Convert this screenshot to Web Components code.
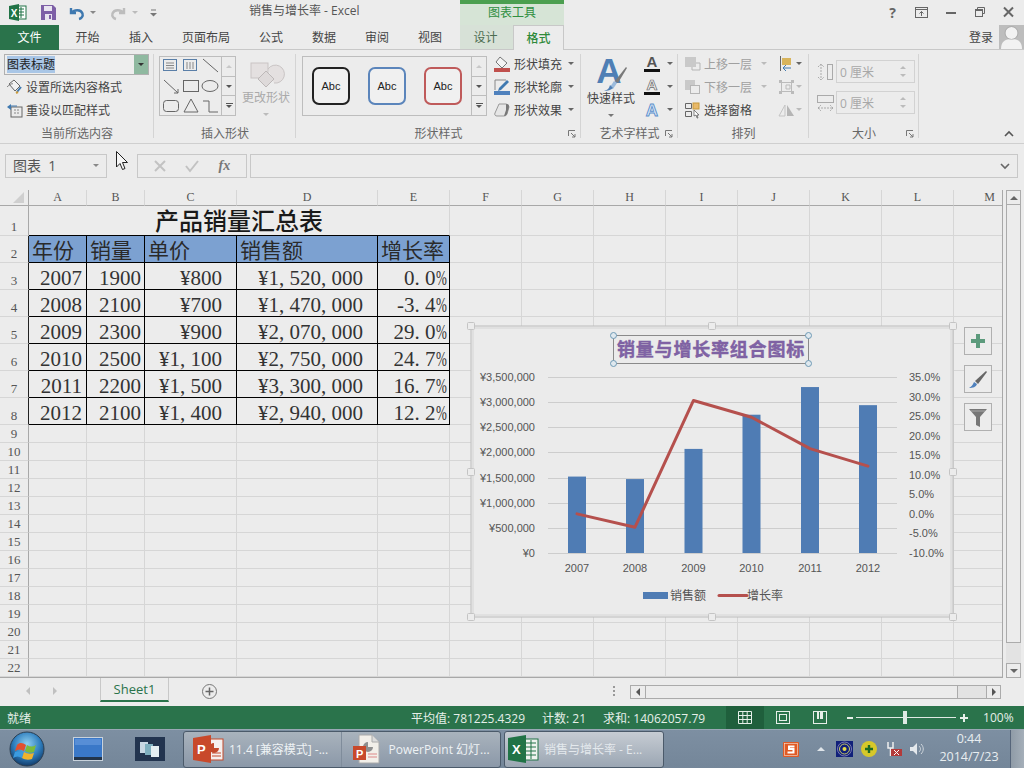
<!DOCTYPE html>
<html lang="zh"><head><meta charset="utf-8"><title>销售与增长率 - Excel</title>
<style>
html,body{margin:0;padding:0;height:100%;overflow:hidden;background:#ececec}
body{font:12px "Open Sans","Noto Sans CJK SC",sans-serif;color:#444;width:1024px;height:768px;position:relative;display:flex;flex-direction:column}
</style></head><body>
<x-titlebar></x-titlebar>
<x-tabs></x-tabs>
<x-ribbon></x-ribbon>
<x-formula></x-formula>
<x-sheet></x-sheet>
<x-sheetbar></x-sheetbar>
<x-status></x-status>
<x-taskbar></x-taskbar>
<x-cursor></x-cursor>
<script>
function def(tag,css,html,init){
  customElements.define(tag,class extends HTMLElement{
    constructor(){super();const s=this.attachShadow({mode:'open'});
      const h=typeof html==='function'?html(this):html;
      s.innerHTML='<style>:host{box-sizing:border-box}*{box-sizing:border-box}'+css+'</style>'+h;
      if(init)init(s,this);}
  });
}
const caret=(c='#666')=>`<i style="display:inline-block;width:0;height:0;border:3px solid transparent;border-top:3px solid ${c};border-bottom:0"></i>`;
const svg=(w,h,b,st='')=>`<svg width="${w}" height="${h}" viewBox="0 0 ${w} ${h}" style="display:block;flex:none;overflow:visible;${st}" fill="none">${b}</svg>`;

def('x-titlebar',`:host{display:flex;align-items:center;height:25px;flex:none;color:#555;position:relative}
.i{flex:none;display:flex;align-items:center;justify-content:center}
.t{position:absolute;left:249px;top:3px;line-height:16px;white-space:nowrap;color:#555}
.band{position:absolute;left:460px;width:104px;top:0;height:25px;background:#d6e4d6;border-top:4px solid #4c9f50;text-align:center;line-height:18px;color:#2f8f3f}
.r{margin-left:auto;display:flex;align-items:center;padding-right:1px;margin-top:-1px}
.r span{width:29px;display:flex;justify-content:center;align-items:center;font-weight:700;font-size:13px;color:#666}`,
`<div class="i" style="margin-left:9px;width:18px">${svg(18,17,'<rect x="7" y="2" width="10" height="13" fill="#fff" stroke="#217346"/><path d="M10 5h5M10 8h5M10 11h5M12 3v11" stroke="#217346"/><path d="M0 2l10-2v17L0 15z" fill="#217346"/><text x="1.8" y="12.5" font-family="Liberation Sans" font-weight="700" font-size="10" fill="#fff">X</text>')}</div>
<div class="i" style="margin-left:13px;width:16px">${svg(15,15,'<path d="M0 0h12l3 3v12H0z" fill="#7d5fa6"/><rect x="3" y="1" width="8" height="5" fill="#e8e4ef"/><rect x="4" y="9" width="7" height="6" fill="#e8e4ef"/><rect x="8" y="10" width="2" height="4" fill="#7d5fa6"/>')}</div>
<div class="i" style="margin-left:12px;width:17px">${svg(16,14,'<path d="M2 2v5h5" stroke="#3f79b0" stroke-width="2.4"/><path d="M3 6.5C5 3.5 12 3 13.5 7.5 14.5 10.5 12 12.5 10 13" stroke="#3f79b0" stroke-width="2.4"/>')}</div>
<div class="i" style="margin-left:4px;width:7px">${caret('#888')}</div>
<div class="i" style="margin-left:14px;width:17px;transform:scaleX(-1)">${svg(16,14,'<path d="M2 2v5h5" stroke="#bdbdbd" stroke-width="2.4"/><path d="M3 6.5C5 3.5 12 3 13.5 7.5 14.5 10.5 12 12.5 10 13" stroke="#bdbdbd" stroke-width="2.4"/>')}</div>
<div class="i" style="margin-left:4px;width:7px">${caret('#bbb')}</div>
<div class="i" style="margin-left:12px;width:7px;display:block">${svg(7,8,'<path d="M1 1h5" stroke="#777"/><path d="M0 4h7L3.500 7.500z" fill="#777"/>')}</div>
<div class="t">销售与增长率 - Excel</div>
<div class="band">图表工具</div>
<div class="r">
<span style="font-size:14px">?</span>
<span>${svg(13,11,'<rect x=".5" y=".5" width="12" height="10" stroke="#666"/><path d="M.5 2.500h12M6.500 9V4.500M4.500 6.500l2-2 2 2" stroke="#666"/>')}</span>
<span>${svg(10,3,'<rect y="1" width="10" height="2" fill="#666"/>')}</span>
<span>${svg(10,10,'<path d="M2.500 2.500V.5h7v6h-2" stroke="#666"/><rect x=".5" y="2.500" width="7" height="7" stroke="#666"/><path d="M.5 3.500h7" stroke="#666"/>')}</span>
<span>${svg(11,10,'<path d="M1 .5l9 9M10 .5l-9 9" stroke="#666" stroke-width="2"/>')}</span>
</div>`);

def('x-tabs',`:host{display:flex;height:25px;flex:none;border-bottom:1px solid #c8c8c8;position:relative}
div{display:flex;align-items:center;justify-content:center;flex:none;height:24px;color:#444;padding-bottom:1px}
.file{width:59px;background:#2a734b;color:#fff;height:25px}
.d{background:#d7e1d7;color:#4c6c50;padding-right:2px}
.f{background:#ececec;border:1px solid #c8c8c8;border-bottom:0;height:25px;color:#2f8a3a;font-weight:500}
.log{margin-left:auto;width:30px;color:#444;justify-content:flex-start}
.av{width:25px;background:#bdbdbd;margin-right:0;align-items:flex-end;margin-left:0;padding:0}`,
`<div class="file">文件</div>
<div style="width:57px">开始</div><div style="width:50px">插入</div><div style="width:80px">页面布局</div><div style="width:50px">公式</div><div style="width:56px">数据</div><div style="width:50px">审阅</div><div style="width:56px">视图</div><div style="width:2px"></div>
<div class="d" style="width:53px">设计</div><div class="f" style="width:51px">格式</div>
<div class="log">登录</div><div class="av">${svg(25,24,'<circle cx="12.500" cy="8" r="6" fill="#f2f2f2"/><path d="M2 24c0-8 5-10 10.500-10S23 16 23 24z" fill="#f2f2f2"/><circle cx="12.500" cy="8" r="6.500" stroke="#9a9a9a" stroke-width=".5"/>')}</div>`);

def('r-group',`:host{display:flex;flex-direction:column;flex:none;height:93px;position:relative}
:host::after{content:"";position:absolute;right:0;top:4px;bottom:5px;width:1px;background:#d4d4d4}
.c{height:74px;display:flex}
.l{height:19px;text-align:center;line-height:20px;color:#666;position:relative}
svg{position:absolute;right:5px;top:6px}`,
h=>`<div class="c"><slot></slot></div><div class="l">${h.getAttribute('label')||''}${h.hasAttribute('launch')?svg(8,8,'<path d="M.5 6V.5H7M3 3l4 4M7 4v3H4" stroke="#777"/>'):''}</div>`);

def('r-item',`:host{display:flex;align-items:center;height:23px;white-space:nowrap;color:#444}
:host([off]){color:#a0a0a0}
.ic{display:flex;justify-content:center;align-items:center;flex:none}
.cr{display:flex}`,
h=>`<span class="ic" style="width:${h.getAttribute('iw')||18}px"><slot name="icon"></slot></span><span style="margin-left:${h.getAttribute('g')||2}px"><slot></slot></span>${h.hasAttribute('cg')?`<span class="cr" style="margin-left:${h.getAttribute('cg')}px">${caret(h.hasAttribute('off')?'#bbb':'#666')}</span>`:''}`);

def('r-scroll',`:host{display:flex;flex-direction:column;width:15px;flex:none;border-left:1px solid #bdbdbd;height:100%}
div{flex:1;display:flex;align-items:center;justify-content:center;border-bottom:1px solid #bdbdbd}
div:last-child{border-bottom:0;flex-direction:column;gap:1px}
.u{border-bottom-color:#bdbdbd}`,
`<div class="u"><i style="width:0;height:0;border:3px solid transparent;border-bottom:3px solid #c8c8c8;border-top:0"></i></div><div>${caret('#555')}</div><div><i style="width:7px;height:1px;background:#555"></i>${caret('#555')}</div>`);

def('r-big',`:host{display:flex;flex-direction:column;align-items:center;width:54px;flex:none;color:#444}
:host([off]){color:#aaa}
.i{height:40px;display:flex;align-items:center;justify-content:center;padding-top:6px}
.t{height:18px;line-height:16px;white-space:nowrap}
.c{height:12px;display:flex;align-items:center}`,
h=>`<div class="i" style="height:${h.getAttribute('ih')||40}px"><slot name="icon"></slot></div><div class="t"><slot></slot></div><div class="c">${caret(h.hasAttribute('off')?'#bbb':'#777')}</div>`);

def('r-abc',`:host{display:flex;align-items:center;justify-content:center;width:38px;height:38px;flex:none;border-radius:7px;border:2px solid var(--c);font:11px "Liberation Sans",sans-serif;color:#222;background:#f0f0f0}`,`<slot></slot>`);

def('r-input',`:host{display:flex;align-items:center;width:79px;height:23px;flex:none;border:1px solid #d2d2d2;background:#ececec;color:#a8a8a8;padding-left:3px;justify-content:space-between;padding-right:8px}
b{display:flex;flex-direction:column;gap:5px}
i{display:block;width:0;height:0;border:3px solid transparent}`,
`<span><slot></slot></span><b><i style="border-top:0;border-bottom:3px solid #bbb"></i><i style="border-bottom:0;border-top:3px solid #bbb"></i></b>`);

def('x-ribbon',`:host{display:flex;height:94px;flex:none;border-bottom:1px solid #cfcfcf;overflow:hidden}
.col{display:flex;flex-direction:column}
.combo{width:145px;height:21px;margin:4px 0 0 4px;border:1px solid #b0b0b0;display:flex;background:#eee}
.combo span{flex:1;padding:1px 0 0 2px}
.combo mark{background:#a9c6e6;color:#222;display:inline-block;line-height:17px}
.combo b{width:14px;background:#8fb9a0;display:flex;align-items:center;justify-content:center}
.gal{display:flex;border:1px solid #bdbdbd;height:60px;margin-top:6px;background:#ececec}
.abc{flex:1;display:flex;align-items:center;padding-left:9px;gap:18px}
.coll{flex:1;display:flex;justify-content:flex-end;align-items:flex-end;padding:0 10px 6px}`,
`<r-group style="width:154px" label="当前所选内容"><div class="col">
  <div class="combo"><span><mark>图表标题</mark></span><b>${caret('#333')}</b></div>
  <r-item style="margin:0 0 0 5px" g="3">${svg(17,16,'<path d="M3 5l5-4 6 6-5 5z" fill="#f2f2f2" stroke="#666"/><path d="M1 8c2-2 5-4 6-3" stroke="#777"/><path d="M11 13l4-5" stroke="#3f79b0" stroke-width="2"/><path d="M10 14l2-1" stroke="#c99a3a" stroke-width="2"/>').replace('<svg','<svg slot="icon"')}设置所选内容格式</r-item>
  <r-item style="margin-left:5px" g="3">${svg(17,16,'<rect x="5" y="5" width="11" height="10" stroke="#666"/><path d="M8 8h6M8 11h6" stroke="#888" stroke-dasharray="2 1"/><path d="M1 5l4-3v6z" fill="#3f79b0"/><path d="M5 4h6" stroke="#3f79b0"/>').replace('<svg','<svg slot="icon"')}重设以匹配样式</r-item>
</div></r-group>

<r-group style="width:142px" label="插入形状">
  <div class="gal" style="width:77px;margin-left:5px">
  ${svg(61,58,`<g stroke="#666"><rect x="3.500" y="2.500" width="13" height="11" stroke="#5a7fa8"/><path d="M6 6h8M6 8.500h8M6 11h8" stroke="#888"/>
  <rect x="23.500" y="2.500" width="13" height="11" stroke="#5a7fa8"/><path d="M27 5v7M30 5v7M33 5v7" stroke="#888"/>
  <path d="M43 2l15 13"/>
  <path d="M4 23l14 13M18 32v4h-4"/><rect x="23.500" y="23.500" width="15" height="11"/><ellipse cx="50" cy="29" rx="8" ry="5.500"/>
  <rect x="3.500" y="43.500" width="15" height="11" rx="3"/><path d="M31 42l7 13H24z"/><path d="M43 44h6v11h9"/></g>`)}
  <r-scroll></r-scroll></div>
  <r-big off style="margin-left:3px">${svg(32,32,'<path d="M18 12a9 9 0 1 1 6 14" fill="#e4e0e0" stroke="#c9c4c4"/><rect x="1" y="6" width="17" height="15" fill="#e4e0e0" stroke="#c9c4c4"/><path d="M16 14l8 8-8 8-8-8z" fill="#dedada" stroke="#bdb8b8"/>').replace('<svg','<svg slot="icon"')}更改形状</r-big>
</r-group>

<r-group style="width:285px" label="形状样式" launch>
  <div class="gal" style="width:185px;margin-left:6px">
    <div class="abc"><r-abc style="--c:#222">Abc</r-abc><r-abc style="--c:#5b85bb">Abc</r-abc><r-abc style="--c:#bf5a5a">Abc</r-abc></div>
    <r-scroll></r-scroll>
  </div>
  <div class="col" style="margin:2px 0 0 6px">
    <r-item cg="6" g="3">${svg(17,16,'<path d="M6 1l7 6-5 5-6-6z" fill="#f4f4f4" stroke="#777"/><rect y="12" width="16" height="4" fill="#c0504d"/>').replace('<svg','<svg slot="icon"')}形状填充</r-item>
    <r-item cg="6" g="3">${svg(17,16,'<path d="M1 11V1h11" stroke="#888"/><path d="M5 9l8-8 2 2-8 8-3 1z" fill="#3f79b0"/><rect y="12" width="16" height="4" fill="#4f81bd"/>').replace('<svg','<svg slot="icon"')}形状轮廓</r-item>
    <r-item cg="6" g="3">${svg(17,14,'<path d="M5 1h7a3 3 0 0 1 3 3l-2 7a3 3 0 0 1-3 2H3a2 2 0 0 1-2-3z" fill="#e6e6e6" stroke="#999"/><path d="M12 1a3 3 0 0 1 3 3l-2 7a3 3 0 0 1-3 2l2-6z" fill="#777"/>').replace('<svg','<svg slot="icon"')}形状效果</r-item>
  </div>
</r-group>

<r-group style="width:97px" label="艺术字样式" launch>
  <r-big ih="41" style="margin-left:3px">${svg(34,36,'<text x="15" y="27" text-anchor="middle" font-family="Liberation Sans" font-weight="700" font-size="35" fill="#4f7fb5">A</text><path d="M16 31l4-6 3 2-4 6z" fill="#9cbbdc"/><path d="M21 25L32 11l1 1-9 15z" fill="#7a7a7a"/><path d="M10 35c4 0 7-1 9-3l-3-3c-1 4-3 5-6 6z" fill="#4f7fb5"/>').replace('<svg','<svg slot="icon"')}快速样式</r-big>
  <div class="col" style="margin:2px 0 0 4px">
    <r-item iw="20" g="0" cg="5">${svg(20,18,'<text x="10" y="12" text-anchor="middle" font-family="Liberation Sans" font-weight="700" font-size="15" fill="#555">A</text><rect x="2" y="14" width="16" height="3" fill="#111"/>').replace('<svg','<svg slot="icon"')}</r-item>
    <r-item iw="20" g="0" cg="5">${svg(20,18,'<text x="10" y="12" text-anchor="middle" font-family="Liberation Sans" font-weight="700" font-size="15" fill="#eee" stroke="#666" stroke-width=".7">A</text><rect x="2" y="14" width="16" height="3" fill="#111"/>').replace('<svg','<svg slot="icon"')}</r-item>
    <r-item iw="20" g="0" cg="5">${svg(20,18,'<text x="10" y="15" text-anchor="middle" font-family="Liberation Sans" font-weight="700" font-size="17" fill="#dbe8f6" stroke="#5b8fcb" stroke-width=".9">A</text>').replace('<svg','<svg slot="icon"')}</r-item>
  </div>
</r-group>

<r-group style="width:131px" label="排列">
  <div class="col" style="margin:2px 0 0 7px;width:92px">
    <r-item off cg="9" g="2" iw="17">${svg(17,16,'<rect x="0" y="1" width="11" height="10" fill="#c9c9c9"/><path d="M11 7h4v7H7v-3" stroke="#b5b5b5"/>').replace('<svg','<svg slot="icon"')}上移一层</r-item>
    <r-item off cg="9" g="2" iw="17">${svg(17,16,'<rect x="0" y="1" width="10" height="10" fill="#c9c9c9"/><rect x="5.500" y="6.500" width="9" height="8" fill="#ececec" stroke="#b5b5b5"/>').replace('<svg','<svg slot="icon"')}下移一层</r-item>
    <r-item g="2" iw="17">${svg(17,16,'<path d="M.5 1.500h6v5h-6zM.5 9.500h6v5h-6z" stroke="#666"/><rect x="8" y="1" width="6" height="6" fill="#e8b96a" stroke="#c99a3a"/><path d="M9 8l5 5-2 0 1 3-1 0-1-3-2 1z" fill="#fff" stroke="#555" stroke-width=".7"/>').replace('<svg','<svg slot="icon"')}选择窗格</r-item>
  </div>
  <div class="col" style="margin:2px 0 0 0">
    <r-item g="0" iw="18" cg="1">${svg(17,16,'<path d="M2.500 0v15" stroke="#666"/><rect x="4" y="2" width="9" height="7" fill="#d8b45c"/><path d="M5 12h8M5 12l3-3M5 12l3 3" stroke="#3f79b0"/>').replace('<svg','<svg slot="icon"')}</r-item>
    <r-item off g="0" iw="18" cg="1">${svg(17,16,'<rect x="3.500" y="3.500" width="10" height="9" stroke="#bbb"/><rect x="1" y="1" width="3" height="3" fill="#bbb"/><rect x="13" y="1" width="3" height="3" fill="#bbb"/><rect x="1" y="12" width="3" height="3" fill="#bbb"/><rect x="13" y="12" width="3" height="3" fill="#bbb"/><path d="M8 6h4v4H8z" stroke="#bbb"/>').replace('<svg','<svg slot="icon"')}</r-item>
    <r-item off g="0" iw="18" cg="1">${svg(17,14,'<path d="M7 2v11H1z" stroke="#c4c4c4"/><path d="M9 2v11h7z" fill="#b5b5b5"/>').replace('<svg','<svg slot="icon"')}</r-item>
  </div>
</r-group>

<r-group style="width:110px" label="大小" launch>
  <div class="col" style="margin:10px 0 0 8px;gap:8px">
    <div style="display:flex;align-items:center;gap:2px">${svg(17,18,'<path d="M4 1v16M1 4l3-3 3 3M1 14l3 3 3-3" stroke="#aaa" stroke-dasharray="2 1"/><rect x="10.500" y="1.500" width="5" height="15" stroke="#aaa"/>')}<r-input>0 厘米</r-input></div>
    <div style="display:flex;align-items:center;gap:2px">${svg(17,18,'<rect x=".5" y="1.500" width="16" height="7" stroke="#aaa"/><path d="M1 14h15M1 14l3-3M1 14l3 3M16 14l-3-3M16 14l-3 3" stroke="#aaa" stroke-dasharray="2 1"/>')}<r-input>0 厘米</r-input></div>
  </div>
</r-group>
<div class="coll">${svg(10,6,'<path d="M1 5l4-4 4 4" stroke="#555" stroke-width="1.600"/>')}</div>`);

def('x-formula',`:host{display:flex;height:46px;flex:none;padding:10px 6px 0 5px;align-items:flex-start}
div{height:24px;border:1px solid #c8c8c8;display:flex;align-items:center;background:#ececec}
.n{width:102px;padding:0 7px 2px;font-size:14px;color:#555;justify-content:space-between}
.f{width:110px;margin-left:30px;justify-content:space-around;padding:0 6px}
.i{flex:1;margin-left:3px;justify-content:flex-end;padding-right:7px}`,
`<div class="n"><span>图表&nbsp;&nbsp;1</span>${caret('#888')}</div>
<div class="f">${svg(12,12,'<path d="M1 1l10 10M11 1L1 11" stroke="#c2c2c2" stroke-width="2"/>')}${svg(14,12,'<path d="M1 6l4 5 8-10" stroke="#c2c2c2" stroke-width="2"/>')}<span style="font:italic 700 14px 'Liberation Serif',serif;color:#777">fx</span></div>
<div class="i">${svg(10,6,'<path d="M1 1l4 4 4-4" stroke="#666" stroke-width="1.600"/>')}</div>`);

const colsW=[29,58,58,92,141,72,72,72,72,72,72,72,72,72];
const rowsH=[16,30,27,27,27,27,27,27,27,...Array(15).fill(18)];
const DATA=[
 ['2007','1900','¥800','¥1,520,000','0.0%'],['2008','2100','¥700','¥1,470,000','-3.4%'],
 ['2009','2300','¥900','¥2,070,000','29.0%'],['2010','2500','¥1,100','¥2,750,000','24.7%'],
 ['2011','2200','¥1,500','¥3,300,000','16.7%'],['2012','2100','¥1,400','¥2,940,000','12.2%']];
const fmt=t=>t.replace(/[,.]/g,m=>`<span class="p">${m}</span>`).replace('%','<span class="pc">%</span>');

def('x-sheet',`:host{display:flex;height:488px;flex:none;position:relative;overflow:hidden}
.g{display:grid;width:1003px;height:488px;overflow:hidden;border-right:1px solid #a8a8a8;border-bottom:1px solid #a8a8a8;grid-template-columns:${colsW.map(x=>x+'px').join(' ')};grid-template-rows:${rowsH.map(x=>x+'px').join(' ')};font-family:"Liberation Serif",serif}
.g>div{border-right:1px solid #d6d6d6;border-bottom:1px solid #d6d6d6;white-space:nowrap}
.ch{display:flex;align-items:center;justify-content:center;font-size:12px;color:#555;border-bottom:1px solid #a8a8a8!important;border-right:1px solid #d0d0d0}
.rh{display:flex;align-items:flex-end;justify-content:center;font-size:13px;color:#555;line-height:16px;border-right:1px solid #a8a8a8!important}
.rh.k{border-right:1px solid #222!important}
.corner{border-right:1px solid #a8a8a8!important;border-bottom:1px solid #a8a8a8!important;display:flex;align-items:flex-end;justify-content:flex-end;padding:0 4px 2px 0}
.t{grid-column:span 5;display:flex;align-items:center;justify-content:center;padding-bottom:2px;font:500 24px/27px "Noto Sans CJK SC",sans-serif;color:#1a1a1a;border-bottom:1px solid #000!important}
.h{background:#7ca1d1;font:21px/26px "Noto Sans CJK SC",sans-serif;color:#2a2a2a;padding-left:3px;border-right:1px solid #000!important;border-bottom:1px solid #000!important}
.d{font-size:21px;line-height:30px;height:27px;color:#333;text-align:right;padding-right:3px;border-right:1px solid #000!important;border-bottom:1px solid #000!important}
.d.m{padding-right:14px}
.p{margin-right:5.250px}
.pc{display:inline-block;width:10.500px;transform:scaleX(.62);transform-origin:left bottom;text-align:left}
.sb{width:15px;margin-left:3px;height:488px;display:flex;flex-direction:column;flex:none;align-items:stretch}
.sb .b{height:15px;border:1px solid #ababab;display:flex;align-items:center;justify-content:center;background:#ececec;flex:none}
.sb .th{height:438px;border:1px solid #ababab;border-top:0;background:#ececec;flex:none}
.sb .tr{flex:1;background:#e3e3e3}
x-chart{position:absolute;left:467px;top:132px}`,
()=>{
 let h='<div class="g"><div class="corner">'+svg(11,11,'<path d="M11 0v11H0z" fill="#cfcfcf"/>')+'</div>';
 'ABCDEFGHIJKLM'.split('').forEach(c=>h+=`<div class="ch">${c}</div>`);
 const heads=['年份','销量','单价','销售额','增长率'];
 for(let r=1;r<=22;r++){
   h+=`<div class="rh${r>=2&&r<=8?' k':''}">${r}</div>`;
   let start=0;
   if(r===1){h+='<div class="t"><span>产品销量汇总表</span></div>';start=5;}
   for(let c=start;c<13;c++){
     if(c<5&&r===2)h+=`<div class="h">${heads[c]}</div>`;
     else if(c<5&&r<=8){const t=DATA[r-3][c];h+=`<div class="d${c===2||c===3?' m':''}"${c===0?' style="padding-right:4px"':''}>${fmt(t)}</div>`;}
     else h+='<div></div>';
   }
 }
 h+='</div><div class="sb"><div class="b">'+`<i style="width:0;height:0;border:4px solid transparent;border-bottom:4px solid #666;border-top:0"></i>`+'</div><div class="th"></div><div class="tr"></div><div class="b">'+`<i style="width:0;height:0;border:4px solid transparent;border-top:4px solid #666;border-bottom:0"></i>`+'</div></div><x-chart></x-chart>';
 return h;
});

(function(){
 const X0=467,Y0=322;
 const cats=['2007','2008','2009','2010','2011','2012'],cx=[577,635,693.5,751.5,810,868];
 const sales=[1520000,1470000,2070000,2750000,3300000,2940000],gr=[0,-3.4,29,24.7,16.7,12.2];
 const left=['¥3,500,000','¥3,000,000','¥2,500,000','¥2,000,000','¥1,500,000','¥1,000,000','¥500,000','¥0'];
 const right=['35.0%','30.0%','25.0%','20.0%','15.0%','10.0%','5.0%','0.0%','-5.0%','-10.0%'];
 let s='';
 s+='<rect x="471" y="326" width="482" height="291" fill="#ebebeb" stroke="#bcbcbc" stroke-width="1"/><rect x="473" y="328" width="478" height="287" stroke="#d6d6d6"/>';
 left.forEach((t,i)=>{const y=377+i*25.14;s+=`<path d="M548 ${Math.round(y)+.5}H897" stroke="#cdcdcd"/><text x="535" y="${y+4}" text-anchor="end" fill="#555">${t}</text>`;});
 right.forEach((t,i)=>{s+=`<text x="909" y="${377+i*19.56+4}" fill="#555">${t}</text>`;});
 sales.forEach((v,i)=>{const h=v/3500000*176;s+=`<rect x="${cx[i]-9}" y="${553-h}" width="18" height="${h}" fill="#4f7cb4"/><text x="${cx[i]}" y="572" text-anchor="middle" fill="#555">${cats[i]}</text>`;});
 s+=`<polyline points="${gr.map((v,i)=>cx[i]+','+(553-(v+10)/45*176)).join(' ')}" stroke="#b5504d" stroke-width="3" stroke-linejoin="round" stroke-linecap="round"/>`;
 s+='<rect x="643" y="592" width="25" height="7" fill="#4f7cb4"/><text x="670" y="599.500" font-size="12" fill="#555" font-family="Noto Sans CJK SC">销售额</text><path d="M719 595.500H747" stroke="#b5504d" stroke-width="3" stroke-linecap="round"/><text x="747" y="599.500" font-size="12" fill="#555" font-family="Noto Sans CJK SC">增长率</text>';
 s+='<rect x="613.500" y="335.500" width="195" height="28" stroke="#8a8a8a"/><text x="711" y="355.500" text-anchor="middle" font-family="Noto Sans CJK SC" font-weight="700" font-size="18" letter-spacing=".8" fill="#8063a6" stroke="#7a5c9c" stroke-width=".4">销量与增长率组合图标</text>';
 [[613.5,335.5],[808.5,335.5],[613.5,363.5],[808.5,363.5]].forEach(p=>s+=`<circle cx="${p[0]}" cy="${p[1]}" r="3" fill="#dfe8ee" stroke="#6f9ab5"/>`);
 [[471,326],[712,326],[953,326],[471,472],[953,472],[471,617],[712,617],[953,617]].forEach(p=>s+=`<rect x="${p[0]-3.5}" y="${p[1]-3.5}" width="7" height="7" rx="1" fill="#ececec" stroke="#c4c4c4"/>`);
 [327,365,403].forEach(y=>s+=`<rect x="964.500" y="${y+.5}" width="27" height="27" fill="#ececec" stroke="#b0b0b0"/>`);
 s+='<path d="M978 334v14M971 341h14" stroke="#5c9a7c" stroke-width="4"/>';
 s+='<path d="M969 388c4 0 7-1 8-4l-3-2c-1 3-3 5-5 6z" fill="#4f81bd"/><path d="M975 381l11-10 1 1-9 12z" fill="#666"/>';
 s+='<path d="M969 409h18l-7 8v10l-4-2v-8z" fill="#777"/><path d="M971 411h14" stroke="#aaa"/>';
 def('x-chart',`:host{display:block;width:535px;height:300px}svg{display:block;font:11px "Liberation Sans",sans-serif}`,
 `<svg width="535" height="300" viewBox="${X0} ${Y0} 535 300" fill="none">${s}</svg>`);
})();

def('x-sheetbar',`:host{display:flex;height:28px;flex:none;align-items:flex-start;position:relative}
.nav{display:flex;width:100px;height:26px;align-items:center;padding-left:26px;gap:23px}
.tab{width:69px;height:24px;margin-top:0;background:#ececec;border:1px solid #c8c8c8;border-top:0;border-bottom:2px solid #2a734b;color:#2a734b;display:flex;align-items:center;justify-content:center;font-size:13px}
.add{margin:6px 0 0 33px}
.dots{margin:8px 0 0 396px}
.hs{margin:7px 0 0 15px;width:371px;height:14px;display:flex;border:1px solid #ababab;background:#e3e3e3}
.hs .b{width:14px;display:flex;align-items:center;justify-content:center;background:#ececec;flex:none}
.hs .th{width:313px;border:1px solid #ababab;border-width:0 1px;background:#ececec}
.hs .r{margin-left:auto;border-left:1px solid #ababab}`,
`<div class="nav"><i style="width:0;height:0;border:4px solid transparent;border-right:4px solid #c0c0c0;border-left:0"></i><i style="width:0;height:0;border:4px solid transparent;border-left:4px solid #c0c0c0;border-right:0"></i></div>
<div class="tab">Sheet1</div>
<div class="add">${svg(15,15,'<circle cx="7.500" cy="7.500" r="7" stroke="#777"/><path d="M7.500 3.500v8M3.500 7.500h8" stroke="#666" stroke-width="1.500"/>')}</div>
<div class="dots">${svg(2,10,'<path d="M1 0v2M1 4v2M1 8v2" stroke="#999" stroke-width="2"/>')}</div>
<div class="hs"><div class="b"><i style="width:0;height:0;border:4px solid transparent;border-right:4px solid #555;border-left:0"></i></div><div class="th"></div><div class="b r"><i style="width:0;height:0;border:4px solid transparent;border-left:4px solid #555;border-right:0"></i></div></div>`);

def('x-status',`:host{display:flex;height:23px;flex:none;background:#2a734b;color:#e6efe9;align-items:center;padding-left:7px;white-space:nowrap}
.st{margin-left:380px;display:flex;gap:17px}
.v{display:flex;align-items:center;justify-content:center;height:23px;flex:none}
.sl{width:100px;height:1px;background:#dfe9e3;position:relative;margin:0 3px 0 3px}
.sl i{position:absolute;left:47px;top:-6px;width:4px;height:13px;background:#dfe9e3}`,
`<span>就绪</span><div class="st"><span>平均值: 781225.4329</span><span>计数: 21</span><span>求和: 14062057.79</span></div>
<div class="v" style="width:38px;margin-left:21px;background:#1f5f3c">${svg(14,13,'<path d="M.5.5h13v12H.5zM.5 4.500h13M.5 8.500h13M4.800.5v12M9.200.5v12" stroke="#e6efe9"/>')}</div>
<div class="v" style="width:38px">${svg(14,13,'<rect x=".5" y=".5" width="13" height="12" stroke="#e6efe9"/><rect x="3.500" y="3.500" width="7" height="6" stroke="#e6efe9"/>')}</div>
<div class="v" style="width:36px">${svg(14,13,'<rect x=".5" y=".5" width="13" height="12" stroke="#e6efe9"/><rect x="4" y="0" width="2" height="8" fill="#e6efe9"/><rect x="7" y="0" width="3" height="8" fill="#e6efe9"/>')}</div>
<div class="v" style="margin-left:8px;width:7px">${svg(6,2,'<rect width="6" height="2" fill="#e6efe9"/>')}</div>
<div class="sl" style="margin-left:3px"><i></i></div>
<div class="v" style="width:8px;margin-left:1px">${svg(8,8,'<path d="M4 0v8M0 4h8" stroke="#e6efe9" stroke-width="2"/>')}</div>
<span style="margin-left:15px">100%</span>`);

def('x-taskbar',`:host{display:flex;height:39px;flex:none;background:linear-gradient(#7d8fa2,#748699);border-top:1px solid #9aa8b5;color:#eef2f4;position:relative;align-items:center}
.o{margin-left:9px;width:36px;flex:none}
.q{flex:none;margin-left:27px}
.grp{display:flex;height:37px;width:318px;border:1px solid #4b5a6a;border-radius:3px;background:linear-gradient(#a9b3bd,#8b98a8)}
.btn{display:flex;align-items:center;flex:1;padding-left:9px;gap:5px;white-space:nowrap;font-size:12px;color:#eef2f4}
.btn+.btn{border-left:1px solid #7f8c9b}
.ex{flex:none;width:160px;height:37px;margin-left:3px;border:1px solid #4b5a6a;border-radius:3px;background:linear-gradient(#c6ccd3,#9ba6b3);display:flex;align-items:center;gap:5px;padding-left:3px;color:#e4e9ed;white-space:nowrap}
.tray{display:flex;align-items:center;margin-left:auto;gap:0}
.clk{width:72px;text-align:center;line-height:18px;font-size:12.500px;color:#e8edf0;margin:-2px 0 0 10px}
.desk{width:14px;height:38px;background:linear-gradient(90deg,#8f9ba7,#a5afb9);border-left:1px solid #56657a;margin-left:5px}`,
`<div class="o">${svg(36,36,'<defs><radialGradient id="g" cx=".5" cy=".35" r=".7"><stop offset="0" stop-color="#8fd0f0"/><stop offset=".55" stop-color="#2f7fbf"/><stop offset="1" stop-color="#0d2f5a"/></radialGradient></defs><circle cx="18" cy="18" r="17" fill="url(#g)" stroke="#2c3e50"/><path d="M8 14c3-3 6-2 9 0l-2 6c-3-2-6-2-9 0z" fill="#e2502f"/><path d="M18 14c3 2 6 2 9 0l-2 7c-3 1-6 1-9-1z" fill="#7cbb3a"/><path d="M6 21c3-1 6-1 9 0l-2 6c-3-2-6-2-9 0z" fill="#3b9be0"/><path d="M15 21c3 2 7 2 10 1l-2 6c-3 1-7 1-10-1z" fill="#f0b32c"/>')}</div>
<div class="q" style="margin-left:28px">${svg(30,24,'<rect x=".5" y=".5" width="29" height="23" fill="#3a78c8" stroke="#c8d2dc"/><rect x="1" y="20" width="28" height="3" fill="#22344a"/><path d="M2 2h26v6H2z" fill="#6a9de0" opacity=".6"/>')}</div>
<div class="q" style="margin-left:32px">${svg(30,24,'<rect width="30" height="24" fill="#22344f"/><rect x="5" y="5" width="8" height="11" fill="#c8d8e4"/><rect x="10" y="7" width="8" height="11" fill="#7fb0c0"/><rect x="16" y="9" width="8" height="11" fill="#e4eef2"/>')}</div>
<div class="grp" style="margin-left:18px">
 <div class="btn">${svg(31,30,'<rect x="13" y="5" width="17" height="21" fill="#f6f0ee" stroke="#c34a2c" /><path d="M21 9a5 5 0 1 0 5 5h-5z" fill="#c34a2c"/><path d="M19 19h9M19 22h9" stroke="#c34a2c"/><path d="M0 4l18-3v28L0 26z" fill="#c8492b"/><text x="4" y="20" font-family="Liberation Sans" font-weight="700" font-size="13" fill="#fff">P</text>')}<span>11.4 [兼容模式] -...</span></div>
 <div class="btn" style="padding-left:11px">${svg(27,30,'<path d="M6 1h13l7 7v21H6z" fill="#f2efe9" stroke="#aaa"/><path d="M19 1v7h7" fill="#ddd" stroke="#aaa"/><path d="M15 8a5 5 0 1 0 5 5h-5z" fill="#8f8f8f"/><path d="M15 20h9M15 23h9" stroke="#d88"/><rect y="12" width="13" height="14" fill="#c8492b"/><text x="3" y="23.500" font-family="Liberation Sans" font-weight="700" font-size="11" fill="#fff">P</text>')}<span style="margin-left:4px">PowerPoint 幻灯...</span></div>
</div>
<div class="ex">${svg(31,30,'<rect x="13" y="5" width="17" height="21" fill="#eef3ef" stroke="#217346"/><path d="M18 9h10M18 13h10M18 17h10M18 21h10M23 6v19" stroke="#217346"/><path d="M0 4l18-3v28L0 26z" fill="#217346"/><text x="4" y="20" font-family="Liberation Sans" font-weight="700" font-size="13" fill="#fff">X</text>')}<span>销售与增长率 - E...</span></div>
<div class="tray">
 ${svg(16,15,'<rect width="16" height="15" rx="1" fill="#e05a25"/><rect x="1.500" y="1.500" width="13" height="12" fill="none" stroke="#f4e6da" stroke-width=".6"/><path d="M11.500 4.500H6v2.500h4.500v3.500H4.500" stroke="#fff" stroke-width="2"/>','margin-right:18px')}
 <i style="width:0;height:0;border:4px solid transparent;border-bottom:4px solid #dfe5ea;border-top:0;margin-right:11px"></i>
 ${svg(17,16,'<rect width="17" height="16" fill="#10207a"/><circle cx="8.500" cy="8" r="2" fill="#e7dc4a"/><circle cx="8.500" cy="8" r="5" stroke="#c9c96a"/><circle cx="8.500" cy="8" r="7" stroke="#7a7ab0"/>','margin-right:8px')}
 ${svg(16,16,'<circle cx="8" cy="8" r="8" fill="#d7c82a"/><path d="M8 4v8M4 8h8" stroke="#1c6a22" stroke-width="2.400"/>','margin-right:9px')}
 ${svg(16,16,'<path d="M2 1v6h5V1M4.500 7v8" stroke="#eee" stroke-width="1.500"/><rect x="5" y="8" width="11" height="7" fill="#b33a3a"/><path d="M8 9l5 5M13 9l-5 5" stroke="#fff"/>','margin-right:7px')}
 ${svg(14,14,'<path d="M1 5h3l4-4v12l-4-4H1z" fill="#e4e8ec"/><path d="M10 4c2 2 2 4 0 6M12 2c3 3 3 7 0 10" stroke="#cfd6dc"/>')}
 <div class="clk">0:44<br>2014/7/23</div>
 <div class="desk"></div>
</div>`);

def('x-cursor',`:host{position:absolute;left:116px;top:151px;display:block}`,
 svg(13,20,'<path d="M.5.5V16l3.500-3.500 2.500 6 2.500-1-2.500-6h5z" fill="#f6f6f6" stroke="#222"/>'));
</script>
</body></html>
